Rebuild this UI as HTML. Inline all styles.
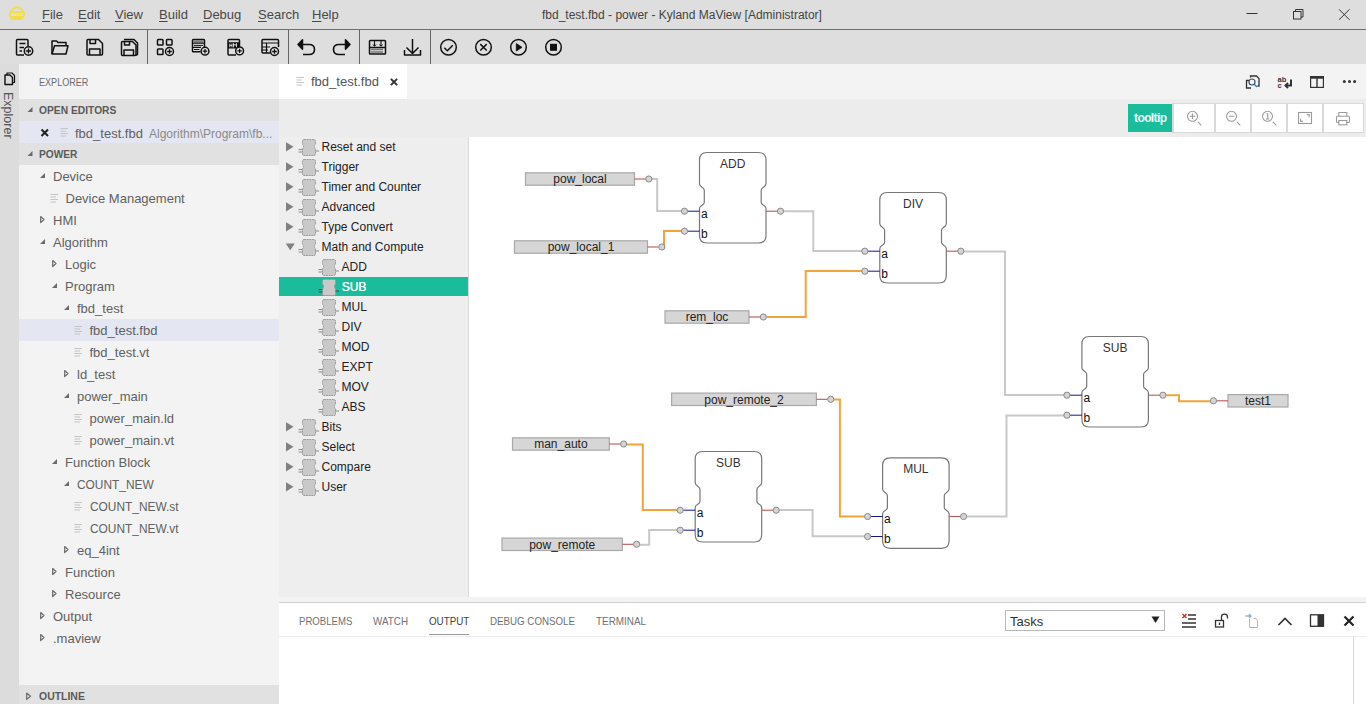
<!DOCTYPE html>
<html><head><meta charset="utf-8">
<style>
*{box-sizing:border-box;margin:0;padding:0}
html,body{width:1366px;height:704px;overflow:hidden;background:#fff;font-family:"Liberation Sans",sans-serif;color:#333}
.abs{position:absolute}
.menu{position:absolute;top:7px;font-size:13px;color:#484848;white-space:nowrap}
.menu u{text-decoration:underline;text-decoration-thickness:1px;text-underline-offset:2px}
.row{position:absolute;left:19px;width:260px;height:22px;font-size:13px;color:#616161;white-space:nowrap}
.row span{position:absolute;top:3px}
.hdr{position:absolute;left:19px;width:260px;height:22px;background:#e1e1e1;font-size:11px;font-weight:bold;color:#555}
.pr{position:absolute;left:279px;width:189px;height:20px;font-size:12px;color:#222;white-space:nowrap}
.pr span{position:absolute;top:3px}
.ptab{position:absolute;top:615px;font-size:11px;color:#717171;white-space:nowrap;transform-origin:0 0}
svg{position:absolute;overflow:visible}
</style></head><body>
<!-- backgrounds -->
<div class="abs" style="left:0;top:0;width:1366px;height:29px;background:#dedede"></div>
<div class="abs" style="left:0;top:29px;width:1366px;height:1px;background:#6e6e6e"></div>
<div class="abs" style="left:0;top:30px;width:1366px;height:34px;background:#dedede"></div>
<div class="abs" style="left:147px;top:30px;width:1px;height:34px;background:#666"></div>
<div class="abs" style="left:288px;top:30px;width:1px;height:34px;background:#666"></div>
<div class="abs" style="left:359px;top:30px;width:1px;height:34px;background:#666"></div>
<div class="abs" style="left:430px;top:30px;width:1px;height:34px;background:#666"></div>
<div class="abs" style="left:0;top:64px;width:19px;height:640px;background:#dcdcdc"></div>
<div class="abs" style="left:19px;top:64px;width:260px;height:640px;background:#f3f3f3"></div>
<div class="abs" style="left:279px;top:64px;width:1087px;height:35px;background:#f3f3f3"></div>
<div class="abs" style="left:279px;top:64px;width:128px;height:35px;background:#fff"></div>
<div class="abs" style="left:279px;top:99px;width:1087px;height:38px;background:#ececec"></div>
<div class="abs" style="left:279px;top:137px;width:189px;height:460px;background:#eeeeee"></div>
<div class="abs" style="left:468px;top:137px;width:898px;height:460px;background:#fff;border-left:1px solid #dadada"></div>
<div class="abs" style="left:279px;top:597px;width:1087px;height:5px;background:#f3f3f3"></div>
<div class="abs" style="left:279px;top:602px;width:1087px;height:102px;background:#fff;border-top:1px solid #d0d0d0"></div>
<!-- title -->
<svg style="left:0;top:0" width="40" height="30" viewBox="0 0 40 30">
 <g fill="none" stroke="#f2dc4c" stroke-width="1.8" stroke-linejoin="round">
  <path d="M10.5 13 Q11 9 17 6.8 Q23 9 23.5 13"/>
  <rect x="9.8" y="12.2" width="14.4" height="4.6" rx="2"/>
 </g>
 <rect x="10.5" y="16" width="13" height="4" rx="1.5" fill="#f2dc4c"/>
 <path d="M13 14.5 H21" stroke="#f6e27a" stroke-width="1.5"/>
 <circle cx="15" cy="17.8" r="0.9" fill="#f7cf6a"/><circle cx="19" cy="17.8" r="0.9" fill="#f7cf6a"/>
</svg>
<div class="menu" style="left:42px"><u>F</u>ile</div>
<div class="menu" style="left:78px"><u>E</u>dit</div>
<div class="menu" style="left:115px"><u>V</u>iew</div>
<div class="menu" style="left:159px"><u>B</u>uild</div>
<div class="menu" style="left:203px"><u>D</u>ebug</div>
<div class="menu" style="left:258px"><u>S</u>earch</div>
<div class="menu" style="left:312px"><u>H</u>elp</div>
<div class="abs" style="left:542px;top:8px;font-size:12px;color:#444;white-space:nowrap">fbd_test.fbd - power - Kyland MaView [Administrator]</div>
<svg style="left:1230px;top:0" width="136" height="29" viewBox="1230 0 136 29">
 <g stroke="#333" stroke-width="1" fill="none">
  <path d="M1246.5 13.5 H1257.5"/>
  <rect x="1293.5" y="11.5" width="7.5" height="7.5"/>
  <path d="M1295.5 11.5 V9.5 H1303 V17 H1301"/>
  <path d="M1339 9.3 L1349.5 19.8 M1349.5 9.3 L1339 19.8"/>
 </g>
</svg>
<!-- toolbar icons -->
<svg style="left:0;top:30px" width="580" height="34" viewBox="0 30 580 34">
 <g stroke="#111" stroke-width="1.5" fill="none" stroke-linejoin="round">
  <!-- new file -->
  <path d="M24 55 H17.5 Q16.5 55 16.5 54 V40.5 Q16.5 39.5 17.5 39.5 H27 Q28 39.5 28 40.5 V46"/>
  <path d="M19.5 43.5 H25.5 M19.5 47.5 H24 M19.5 51 H22"/>
  <circle cx="28.5" cy="51" r="4.2" fill="#dedede"/>
  <path d="M28.5 48.5 V53.5 M26 51 H31" stroke-width="1.3"/>
  <!-- folder -->
  <path d="M52 54 V41 H56.5 L58 42.5 H66 V45.5"/>
  <path d="M52 54 L54.5 45.8 H68 L66 54 Z"/>
  <!-- save -->
  <path d="M88 39.5 H98.5 L102.5 43.5 V54 Q102.5 55 101.5 55 H88 Q87 55 87 54 V40.5 Q87 39.5 88 39.5 Z"/>
  <path d="M90 39.5 V43.5 H95.5 V39.5"/>
  <path d="M89.5 55 V49 H100 V55"/>
  <!-- save all -->
  <path d="M124 39.5 H134 L137.5 43 V54 Q137.5 55 136.5 55 H136"/>
  <path d="M122.5 41.5 H132.5 L136 45 V54.5 Q136 55.5 135 55.5 H122.5 Q121.5 55.5 121.5 54.5 V42.5 Q121.5 41.5 122.5 41.5 Z"/>
  <path d="M124.5 41.5 V45 H129.5 V41.5"/>
  <path d="M124 55.5 V50 H133.5 V55.5"/>
  <!-- grid add -->
  <rect x="157.5" y="39.5" width="5.5" height="5.5" rx="0.8"/>
  <rect x="166.5" y="39.5" width="5.5" height="5.5" rx="0.8"/>
  <rect x="157.5" y="49" width="5.5" height="5.5" rx="0.8"/>
  <circle cx="169.5" cy="51.5" r="4" fill="#dedede"/>
  <path d="M169.5 49.2 V53.8 M167.2 51.5 H171.8" stroke-width="1.3"/>
  <!-- list add -->
  <path d="M200.5 51.8 H193.2 Q192.5 51.8 192.5 51 V40.3 Q192.5 39.5 193.3 39.5 H203.8 Q204.5 39.5 204.5 40.3 V47"/>
  <rect x="193.2" y="40.2" width="10.6" height="2.8" fill="#808080" stroke="none"/>
  <path d="M192.5 43.2 H204.5 M192.5 47.4 H201" stroke-width="1.1"/>
  <path d="M194 45.4 H203 M194 49.5 H199.5" stroke-width="1"/>
  <circle cx="205" cy="51.2" r="3.9" fill="#dedede"/>
  <path d="M205 49 V53.4 M202.8 51.2 H207.2" stroke-width="1.2"/>
  <!-- HMI add -->
  <path d="M236 55 H229 Q228 55 228 54 V40.5 Q228 39.5 229 39.5 H238.5 Q239.5 39.5 239.5 40.5 V46"/>
  <rect x="228" y="42.2" width="12" height="6.3" fill="#111" stroke="none"/>
  <path d="M229.8 43.5 V47.3 M232 43.5 V47.3 M229.8 45.4 H232 M233.5 47.3 V43.5 L235 45.5 L236.5 43.5 V47.3" stroke="#fff" stroke-width="0.8" stroke-linejoin="miter"/>
  <circle cx="239.6" cy="50.9" r="3.9" fill="#dedede"/>
  <path d="M239.6 48.7 V53.1 M237.4 50.9 H241.8" stroke-width="1.2"/>
  <!-- table add -->
  <path d="M270 53 H263 Q262 53 262 52 V40.5 Q262 39.5 263 39.5 H277.5 Q278.5 39.5 278.5 40.5 V47"/>
  <path d="M262 43 H278.5 M262 47 H270 M262 50 H268 M266.5 43 V53" stroke-width="1.2"/>
  <circle cx="274.5" cy="51.5" r="4" fill="#dedede"/>
  <path d="M274.5 49.2 V53.8 M272.2 51.5 H276.8" stroke-width="1.3"/>
  <!-- undo -->
  <path d="M302 44.5 H309 Q314.5 44.5 314.5 49.5 Q314.5 54.5 309 54.5 H303" stroke-width="1.6"/>
  <path d="M298 44.5 L302.5 39.8 V49.2 Z" fill="#111"/>
  <!-- redo -->
  <path d="M346 44.5 H339 Q333.5 44.5 333.5 49.5 Q333.5 54.5 339 54.5 H345" stroke-width="1.6"/>
  <path d="M350 44.5 L345.5 39.8 V49.2 Z" fill="#111"/>
  <!-- build -->
  <rect x="369.5" y="40.5" width="16" height="13.5" rx="0.8"/>
  <path d="M369.5 47.5 H385.5"/>
  <path d="M374.5 41 V46 M381 41 V46" stroke-width="1.1"/>
  <path d="M373 44.5 L374.5 46.3 L376 44.5 M379.5 44.5 L381 46.3 L382.5 44.5" stroke-width="1"/>
  <path d="M371.5 49.5 H383.5 M371.5 52 H383.5" stroke-width="1.3" stroke-dasharray="1 1"/>
  <!-- download -->
  <path d="M412.5 39 V53.5 M406.5 47.5 L412.5 53.5 L418.5 47.5"/>
  <path d="M404.5 50 V55 H420.5 V50"/>
  <!-- circles -->
  <circle cx="448.5" cy="47.3" r="7.8"/>
  <path d="M444.3 47.8 L447.3 50.8 L452.8 45.3"/>
  <circle cx="483.5" cy="47.3" r="7.8"/>
  <path d="M480.3 44.1 L486.7 50.5 M486.7 44.1 L480.3 50.5"/>
  <circle cx="518.5" cy="47.3" r="7.8"/>
  <path d="M516.3 43.5 L522 47.3 L516.3 51.1 Z" fill="#111" stroke-width="0.8"/>
  <circle cx="553.5" cy="47.3" r="7.8"/>
  <rect x="550" y="43.8" width="7" height="7" fill="#111" stroke="none"/>
 </g>
</svg>
<!-- sidebar -->
<svg style="left:0;top:64px" width="19" height="80" viewBox="0 64 19 80">
 <g stroke="#111" stroke-width="1.4" fill="none" stroke-linejoin="round">
  <path d="M5 75 H10 L12.5 77.5 V84.5 H5 Z"/>
  <path d="M7 75 V73 H12 L14.5 75.5 V82.5 H12.5" stroke-width="1.2"/>
 </g>
</svg>
<div class="abs" style="left:15px;top:91.5px;font-size:12.5px;color:#555;transform:rotate(90deg);transform-origin:0 0;white-space:nowrap">Explorer</div>
<div class="abs" style="left:39px;top:77px;font-size:10px;color:#6b6b6b;white-space:nowrap;transform:scaleX(0.906);transform-origin:0 0">EXPLORER</div>
<div class="hdr" style="top:99px"></div>
<svg style="left:25px;top:104px" width="12" height="12" viewBox="0 0 12 12"><path d="M7.5 3 V8 H2.5 Z" fill="#6a6a6a"/></svg>
<div class="abs" style="left:39px;top:104px;font-size:11px;font-weight:bold;color:#5a5a5a;white-space:nowrap;transform:scaleX(0.933);transform-origin:0 0">OPEN EDITORS</div>
<div class="abs" style="left:19px;top:121px;width:260px;height:22px;background:#e4e6f1"></div>
<svg style="left:40px;top:128px" width="10" height="10" viewBox="0 0 10 10"><path d="M1.5 1.5 L8 8 M8 1.5 L1.5 8" stroke="#222" stroke-width="2"/></svg>
<svg style="left:60px;top:127px" width="10" height="11" viewBox="0 0 10 11"><path d="M0.5 1.5 H8 M0.5 4 H6 M0.5 6.5 H8 M0.5 9 H6" stroke="#c4c4c4" stroke-width="1.2"/></svg>
<div class="abs" style="left:75px;top:125.5px;font-size:13px;color:#616161;white-space:nowrap">fbd_test.fbd</div>
<div class="abs" style="left:149px;top:126.5px;font-size:12px;color:#8a8a8a;white-space:nowrap">Algorithm\Program\fb...</div>
<div class="hdr" style="top:143px"></div>
<svg style="left:25px;top:148px" width="12" height="12" viewBox="0 0 12 12"><path d="M7.5 3 V8 H2.5 Z" fill="#6a6a6a"/></svg>
<div class="abs" style="left:39px;top:148px;font-size:11px;font-weight:bold;color:#5a5a5a;white-space:nowrap;transform:scaleX(0.924);transform-origin:0 0">POWER</div>

<svg style="left:40px;top:171px" width="8" height="10" viewBox="0 0 8 10"><path d="M5 2 V7 H0 Z" fill="#6a6a6a"/></svg>
<div class="abs" style="left:53px;top:169px;font-size:13px;color:#616161;white-space:nowrap">Device</div>
<svg style="left:50px;top:193px" width="10" height="11" viewBox="0 0 10 11"><path d="M0.5 1.5 H8 M0.5 4 H6 M0.5 6.5 H8 M0.5 9 H6" stroke="#c4c4c4" stroke-width="1.2"/></svg>
<div class="abs" style="left:65.5px;top:191px;font-size:13px;color:#616161;white-space:nowrap">Device Management</div>
<svg style="left:40px;top:215px" width="8" height="10" viewBox="0 0 8 10"><path d="M0.7 1.5 L4 4.5 L0.7 7.5 Z" fill="none" stroke="#6a6a6a" stroke-width="1.2" stroke-linejoin="round"/></svg>
<div class="abs" style="left:53px;top:213px;font-size:13px;color:#616161;white-space:nowrap">HMI</div>
<svg style="left:40px;top:237px" width="8" height="10" viewBox="0 0 8 10"><path d="M5 2 V7 H0 Z" fill="#6a6a6a"/></svg>
<div class="abs" style="left:53px;top:235px;font-size:13px;color:#616161;white-space:nowrap">Algorithm</div>
<svg style="left:52px;top:259px" width="8" height="10" viewBox="0 0 8 10"><path d="M0.7 1.5 L4 4.5 L0.7 7.5 Z" fill="none" stroke="#6a6a6a" stroke-width="1.2" stroke-linejoin="round"/></svg>
<div class="abs" style="left:65px;top:257px;font-size:13px;color:#616161;white-space:nowrap">Logic</div>
<svg style="left:52px;top:281px" width="8" height="10" viewBox="0 0 8 10"><path d="M5 2 V7 H0 Z" fill="#6a6a6a"/></svg>
<div class="abs" style="left:65px;top:279px;font-size:13px;color:#616161;white-space:nowrap">Program</div>
<svg style="left:64px;top:303px" width="8" height="10" viewBox="0 0 8 10"><path d="M5 2 V7 H0 Z" fill="#6a6a6a"/></svg>
<div class="abs" style="left:77px;top:301px;font-size:13px;color:#616161;white-space:nowrap">fbd_test</div>
<div class="abs" style="left:19px;top:319px;width:260px;height:22px;background:#e4e6f1"></div>
<svg style="left:74px;top:325px" width="10" height="11" viewBox="0 0 10 11"><path d="M0.5 1.5 H8 M0.5 4 H6 M0.5 6.5 H8 M0.5 9 H6" stroke="#c4c4c4" stroke-width="1.2"/></svg>
<div class="abs" style="left:89.5px;top:323px;font-size:13px;color:#616161;white-space:nowrap">fbd_test.fbd</div>
<svg style="left:74px;top:347px" width="10" height="11" viewBox="0 0 10 11"><path d="M0.5 1.5 H8 M0.5 4 H6 M0.5 6.5 H8 M0.5 9 H6" stroke="#c4c4c4" stroke-width="1.2"/></svg>
<div class="abs" style="left:89.5px;top:345px;font-size:13px;color:#616161;white-space:nowrap">fbd_test.vt</div>
<svg style="left:64px;top:369px" width="8" height="10" viewBox="0 0 8 10"><path d="M0.7 1.5 L4 4.5 L0.7 7.5 Z" fill="none" stroke="#6a6a6a" stroke-width="1.2" stroke-linejoin="round"/></svg>
<div class="abs" style="left:77px;top:367px;font-size:13px;color:#616161;white-space:nowrap">ld_test</div>
<svg style="left:64px;top:391px" width="8" height="10" viewBox="0 0 8 10"><path d="M5 2 V7 H0 Z" fill="#6a6a6a"/></svg>
<div class="abs" style="left:77px;top:389px;font-size:13px;color:#616161;white-space:nowrap">power_main</div>
<svg style="left:74px;top:413px" width="10" height="11" viewBox="0 0 10 11"><path d="M0.5 1.5 H8 M0.5 4 H6 M0.5 6.5 H8 M0.5 9 H6" stroke="#c4c4c4" stroke-width="1.2"/></svg>
<div class="abs" style="left:89.5px;top:411px;font-size:13px;color:#616161;white-space:nowrap">power_main.ld</div>
<svg style="left:74px;top:435px" width="10" height="11" viewBox="0 0 10 11"><path d="M0.5 1.5 H8 M0.5 4 H6 M0.5 6.5 H8 M0.5 9 H6" stroke="#c4c4c4" stroke-width="1.2"/></svg>
<div class="abs" style="left:89.5px;top:433px;font-size:13px;color:#616161;white-space:nowrap">power_main.vt</div>
<svg style="left:52px;top:457px" width="8" height="10" viewBox="0 0 8 10"><path d="M5 2 V7 H0 Z" fill="#6a6a6a"/></svg>
<div class="abs" style="left:65px;top:455px;font-size:13px;color:#616161;white-space:nowrap">Function Block</div>
<svg style="left:64px;top:479px" width="8" height="10" viewBox="0 0 8 10"><path d="M5 2 V7 H0 Z" fill="#6a6a6a"/></svg>
<div class="abs" style="left:77px;top:477px;font-size:13px;color:#616161;white-space:nowrap;transform:scaleX(0.915);transform-origin:0 0">COUNT_NEW</div>
<svg style="left:74px;top:501px" width="10" height="11" viewBox="0 0 10 11"><path d="M0.5 1.5 H8 M0.5 4 H6 M0.5 6.5 H8 M0.5 9 H6" stroke="#c4c4c4" stroke-width="1.2"/></svg>
<div class="abs" style="left:89.5px;top:499px;font-size:13px;color:#616161;white-space:nowrap;transform:scaleX(0.915);transform-origin:0 0">COUNT_NEW.st</div>
<svg style="left:74px;top:523px" width="10" height="11" viewBox="0 0 10 11"><path d="M0.5 1.5 H8 M0.5 4 H6 M0.5 6.5 H8 M0.5 9 H6" stroke="#c4c4c4" stroke-width="1.2"/></svg>
<div class="abs" style="left:89.5px;top:521px;font-size:13px;color:#616161;white-space:nowrap;transform:scaleX(0.915);transform-origin:0 0">COUNT_NEW.vt</div>
<svg style="left:64px;top:545px" width="8" height="10" viewBox="0 0 8 10"><path d="M0.7 1.5 L4 4.5 L0.7 7.5 Z" fill="none" stroke="#6a6a6a" stroke-width="1.2" stroke-linejoin="round"/></svg>
<div class="abs" style="left:77px;top:543px;font-size:13px;color:#616161;white-space:nowrap">eq_4int</div>
<svg style="left:52px;top:567px" width="8" height="10" viewBox="0 0 8 10"><path d="M0.7 1.5 L4 4.5 L0.7 7.5 Z" fill="none" stroke="#6a6a6a" stroke-width="1.2" stroke-linejoin="round"/></svg>
<div class="abs" style="left:65px;top:565px;font-size:13px;color:#616161;white-space:nowrap">Function</div>
<svg style="left:52px;top:589px" width="8" height="10" viewBox="0 0 8 10"><path d="M0.7 1.5 L4 4.5 L0.7 7.5 Z" fill="none" stroke="#6a6a6a" stroke-width="1.2" stroke-linejoin="round"/></svg>
<div class="abs" style="left:65px;top:587px;font-size:13px;color:#616161;white-space:nowrap">Resource</div>
<svg style="left:40px;top:611px" width="8" height="10" viewBox="0 0 8 10"><path d="M0.7 1.5 L4 4.5 L0.7 7.5 Z" fill="none" stroke="#6a6a6a" stroke-width="1.2" stroke-linejoin="round"/></svg>
<div class="abs" style="left:53px;top:609px;font-size:13px;color:#616161;white-space:nowrap">Output</div>
<svg style="left:40px;top:633px" width="8" height="10" viewBox="0 0 8 10"><path d="M0.7 1.5 L4 4.5 L0.7 7.5 Z" fill="none" stroke="#6a6a6a" stroke-width="1.2" stroke-linejoin="round"/></svg>
<div class="abs" style="left:53px;top:631px;font-size:13px;color:#616161;white-space:nowrap">.maview</div>
<div class="abs" style="left:19px;top:685px;width:260px;height:19px;background:#e1e1e1"></div>
<svg style="left:26px;top:692px" width="8" height="10" viewBox="0 0 8 10"><path d="M0.7 1 L4.5 4.2 L0.7 7.4 Z" fill="none" stroke="#6a6a6a" stroke-width="1.2" stroke-linejoin="round"/></svg>
<div class="abs" style="left:39px;top:690px;font-size:11px;font-weight:bold;color:#5a5a5a;white-space:nowrap;transform:scaleX(0.95);transform-origin:0 0">OUTLINE</div><!-- editor tab -->
<svg style="left:296px;top:76px" width="10" height="11" viewBox="0 0 10 11"><path d="M0.5 1.5 H8 M0.5 4 H6 M0.5 6.5 H8 M0.5 9 H6" stroke="#c4c4c4" stroke-width="1.2"/></svg>
<div class="abs" style="left:311px;top:74px;font-size:13px;color:#555;white-space:nowrap">fbd_test.fbd</div>
<svg style="left:390px;top:78px" width="10" height="10" viewBox="0 0 10 10"><path d="M0.9 0.9 L7.1 7.1 M7.1 0.9 L0.9 7.1" stroke="#333" stroke-width="2"/></svg>
<svg style="left:1240px;top:70px" width="126" height="24" viewBox="1240 70 126 24">
 <g fill="none" stroke="#333" stroke-width="1.3">
  <path d="M1250.5 77.5 V76 H1256.5 L1259 78.5 V86 H1257.5"/>
  <path d="M1249 80.5 H1246.5 V88 H1251"/>
  <circle cx="1252" cy="82" r="3" stroke="#34526f" stroke-width="1.2"/>
  <path d="M1254.2 84.2 L1257 87" stroke="#3b78b8" stroke-width="1.4"/>
  <path d="M1291 79.5 V85.5 H1286" stroke-width="2"/>
  <path d="M1288 83 L1285.5 85.5 L1288 88" stroke-width="2"/>
  <rect x="1310.6" y="76.6" width="12.8" height="10.8" stroke-width="1.2"/>
  <path d="M1310.5 77.6 H1323.5" stroke-width="2.2"/>
  <path d="M1317 77 V87.5" stroke-width="1.4"/>
 </g>
 <text x="1277.5" y="82" font-size="7.5" font-weight="bold" fill="#333" font-family="Liberation Sans">ab</text>
 <text x="1277.5" y="88" font-size="7.5" font-weight="bold" fill="#333" font-family="Liberation Sans">c</text>
 <g fill="#333"><circle cx="1344.3" cy="81.5" r="1.5"/><circle cx="1349.5" cy="81.5" r="1.5"/><circle cx="1354.6" cy="81.5" r="1.5"/></g>
</svg>
<div class="abs" style="left:1128px;top:104px;width:44px;height:28px;background:#1abc9c"></div>
<div class="abs" style="left:1134px;top:111px;font-size:12px;font-weight:bold;color:#eefcf8;white-space:nowrap;letter-spacing:-0.6px">tooltip</div>
<div class="abs" style="left:1172px;top:103px;width:192px;height:30px;background:#d9d9d9"></div>
<div class="abs" style="left:1174px;top:104px;width:40px;height:28px;background:#fff"></div>
<div class="abs" style="left:1216px;top:104px;width:34px;height:28px;background:#fff"></div>
<div class="abs" style="left:1252px;top:104px;width:34px;height:28px;background:#fff"></div>
<div class="abs" style="left:1288px;top:104px;width:34px;height:28px;background:#fff"></div>
<div class="abs" style="left:1324px;top:104px;width:39px;height:28px;background:#fff"></div>
<svg style="left:1173px;top:103px" width="193" height="30" viewBox="1173 103 193 30">
 <g fill="none" stroke="#9a9a9a" stroke-width="1.1">
  <circle cx="1192.5" cy="116.3" r="5"/><path d="M1192.5 113.6 V119 M1189.8 116.3 H1195.2 M1197.8 121.9 L1201.3 125.4"/>
  <circle cx="1231.5" cy="116.3" r="5"/><path d="M1228.8 116.3 H1234.2 M1236.8 121.9 L1240.3 125.4"/>
  <circle cx="1267.5" cy="116.3" r="5"/><path d="M1267.7 113.5 V119 M1266 119 H1269.2 M1266.6 114.3 L1267.7 113.5 M1272.8 121.9 L1276.3 125.4"/>
  <rect x="1298.5" y="112.5" width="13" height="11"/>
  <path d="M1306.8 114.6 H1309.2 V117.2 M1300.6 118.8 V121.4 H1303"/>
  <path d="M1338.8 116.3 V112.5 H1346.8 V116.3"/>
  <path d="M1339 122.5 H1337.5 Q1336.5 122.5 1336.5 121.5 V117.3 Q1336.5 116.3 1337.5 116.3 H1348.5 Q1349.5 116.3 1349.5 117.3 V121.5 Q1349.5 122.5 1348.5 122.5 H1346.5"/>
  <rect x="1338.8" y="120.5" width="8" height="4.3"/>
 </g>
</svg>
<div class="abs" style="left:279px;top:277px;width:189px;height:19px;background:#1abc9c"></div>
<svg style="left:285px;top:141px" width="10" height="12" viewBox="0 0 10 12"><path d="M1 1.2 L8.5 5.8 L1 10.4 Z" fill="#808080"/></svg>
<svg style="left:298px;top:139px" width="22" height="18" viewBox="0 0 22 18"><path d="M6 0.5 H16 Q17.5 0.5 17.5 2 V4.8 Q17.5 5.6 16.5 6.3 V8.7 Q17.5 9.4 17.5 10.2 V15 Q17.5 16.5 16 16.5 H6 Q4.5 16.5 4.5 15 V10.2 Q4.5 9.4 5.5 8.7 V6.3 Q4.5 5.6 4.5 4.8 V2 Q4.5 0.5 6 0.5 Z" fill="#c9c9c9" stroke="#9c9c9c" stroke-width="1" stroke-dasharray="2 0.6"/><path d="M0.5 10.5 H4.5 M0.5 13 H4.5 M17.5 12 H21" stroke="#888" stroke-width="1"/></svg>
<div class="abs" style="left:321.5px;top:140px;font-size:12px;color:#222;white-space:nowrap">Reset and set</div>
<svg style="left:285px;top:161px" width="10" height="12" viewBox="0 0 10 12"><path d="M1 1.2 L8.5 5.8 L1 10.4 Z" fill="#808080"/></svg>
<svg style="left:298px;top:159px" width="22" height="18" viewBox="0 0 22 18"><path d="M6 0.5 H16 Q17.5 0.5 17.5 2 V4.8 Q17.5 5.6 16.5 6.3 V8.7 Q17.5 9.4 17.5 10.2 V15 Q17.5 16.5 16 16.5 H6 Q4.5 16.5 4.5 15 V10.2 Q4.5 9.4 5.5 8.7 V6.3 Q4.5 5.6 4.5 4.8 V2 Q4.5 0.5 6 0.5 Z" fill="#c9c9c9" stroke="#9c9c9c" stroke-width="1" stroke-dasharray="2 0.6"/><path d="M0.5 10.5 H4.5 M0.5 13 H4.5 M17.5 12 H21" stroke="#888" stroke-width="1"/></svg>
<div class="abs" style="left:321.5px;top:160px;font-size:12px;color:#222;white-space:nowrap">Trigger</div>
<svg style="left:285px;top:181px" width="10" height="12" viewBox="0 0 10 12"><path d="M1 1.2 L8.5 5.8 L1 10.4 Z" fill="#808080"/></svg>
<svg style="left:298px;top:179px" width="22" height="18" viewBox="0 0 22 18"><path d="M6 0.5 H16 Q17.5 0.5 17.5 2 V4.8 Q17.5 5.6 16.5 6.3 V8.7 Q17.5 9.4 17.5 10.2 V15 Q17.5 16.5 16 16.5 H6 Q4.5 16.5 4.5 15 V10.2 Q4.5 9.4 5.5 8.7 V6.3 Q4.5 5.6 4.5 4.8 V2 Q4.5 0.5 6 0.5 Z" fill="#c9c9c9" stroke="#9c9c9c" stroke-width="1" stroke-dasharray="2 0.6"/><path d="M0.5 10.5 H4.5 M0.5 13 H4.5 M17.5 12 H21" stroke="#888" stroke-width="1"/></svg>
<div class="abs" style="left:321.5px;top:180px;font-size:12px;color:#222;white-space:nowrap">Timer and Counter</div>
<svg style="left:285px;top:201px" width="10" height="12" viewBox="0 0 10 12"><path d="M1 1.2 L8.5 5.8 L1 10.4 Z" fill="#808080"/></svg>
<svg style="left:298px;top:199px" width="22" height="18" viewBox="0 0 22 18"><path d="M6 0.5 H16 Q17.5 0.5 17.5 2 V4.8 Q17.5 5.6 16.5 6.3 V8.7 Q17.5 9.4 17.5 10.2 V15 Q17.5 16.5 16 16.5 H6 Q4.5 16.5 4.5 15 V10.2 Q4.5 9.4 5.5 8.7 V6.3 Q4.5 5.6 4.5 4.8 V2 Q4.5 0.5 6 0.5 Z" fill="#c9c9c9" stroke="#9c9c9c" stroke-width="1" stroke-dasharray="2 0.6"/><path d="M0.5 10.5 H4.5 M0.5 13 H4.5 M17.5 12 H21" stroke="#888" stroke-width="1"/></svg>
<div class="abs" style="left:321.5px;top:200px;font-size:12px;color:#222;white-space:nowrap">Advanced</div>
<svg style="left:285px;top:221px" width="10" height="12" viewBox="0 0 10 12"><path d="M1 1.2 L8.5 5.8 L1 10.4 Z" fill="#808080"/></svg>
<svg style="left:298px;top:219px" width="22" height="18" viewBox="0 0 22 18"><path d="M6 0.5 H16 Q17.5 0.5 17.5 2 V4.8 Q17.5 5.6 16.5 6.3 V8.7 Q17.5 9.4 17.5 10.2 V15 Q17.5 16.5 16 16.5 H6 Q4.5 16.5 4.5 15 V10.2 Q4.5 9.4 5.5 8.7 V6.3 Q4.5 5.6 4.5 4.8 V2 Q4.5 0.5 6 0.5 Z" fill="#c9c9c9" stroke="#9c9c9c" stroke-width="1" stroke-dasharray="2 0.6"/><path d="M0.5 10.5 H4.5 M0.5 13 H4.5 M17.5 12 H21" stroke="#888" stroke-width="1"/></svg>
<div class="abs" style="left:321.5px;top:220px;font-size:12px;color:#222;white-space:nowrap">Type Convert</div>
<svg style="left:285px;top:242px" width="11" height="10" viewBox="0 0 11 10"><path d="M0.7 1.5 H9.8 L5.25 8.2 Z" fill="#808080"/></svg>
<svg style="left:298px;top:239px" width="22" height="18" viewBox="0 0 22 18"><path d="M6 0.5 H16 Q17.5 0.5 17.5 2 V4.8 Q17.5 5.6 16.5 6.3 V8.7 Q17.5 9.4 17.5 10.2 V15 Q17.5 16.5 16 16.5 H6 Q4.5 16.5 4.5 15 V10.2 Q4.5 9.4 5.5 8.7 V6.3 Q4.5 5.6 4.5 4.8 V2 Q4.5 0.5 6 0.5 Z" fill="#c9c9c9" stroke="#9c9c9c" stroke-width="1" stroke-dasharray="2 0.6"/><path d="M0.5 10.5 H4.5 M0.5 13 H4.5 M17.5 12 H21" stroke="#888" stroke-width="1"/></svg>
<div class="abs" style="left:321.5px;top:240px;font-size:12px;color:#222;white-space:nowrap">Math and Compute</div>
<svg style="left:318px;top:259px" width="22" height="18" viewBox="0 0 22 18"><path d="M6 0.5 H16 Q17.5 0.5 17.5 2 V4.8 Q17.5 5.6 16.5 6.3 V8.7 Q17.5 9.4 17.5 10.2 V15 Q17.5 16.5 16 16.5 H6 Q4.5 16.5 4.5 15 V10.2 Q4.5 9.4 5.5 8.7 V6.3 Q4.5 5.6 4.5 4.8 V2 Q4.5 0.5 6 0.5 Z" fill="#c9c9c9" stroke="#9c9c9c" stroke-width="1" stroke-dasharray="2 0.6"/><path d="M0.5 10.5 H4.5 M0.5 13 H4.5 M17.5 12 H21" stroke="#888" stroke-width="1"/></svg>
<div class="abs" style="left:341.5px;top:260px;font-size:12px;color:#222;white-space:nowrap">ADD</div>
<svg style="left:318px;top:279px" width="22" height="18" viewBox="0 0 22 18"><path d="M6 0.5 H16 Q17.5 0.5 17.5 2 V4.8 Q17.5 5.6 16.5 6.3 V8.7 Q17.5 9.4 17.5 10.2 V15 Q17.5 16.5 16 16.5 H6 Q4.5 16.5 4.5 15 V10.2 Q4.5 9.4 5.5 8.7 V6.3 Q4.5 5.6 4.5 4.8 V2 Q4.5 0.5 6 0.5 Z" fill="#c9c9c9" stroke="#9c9c9c" stroke-width="1" stroke-dasharray="2 0.6"/><path d="M0.5 10.5 H4.5 M0.5 13 H4.5 M17.5 12 H21" stroke="#444" stroke-width="1"/></svg>
<div class="abs" style="left:341.5px;top:280px;font-size:12px;color:#effffb;white-space:nowrap;text-shadow:0.4px 0 0 #effffb">SUB</div>
<svg style="left:318px;top:299px" width="22" height="18" viewBox="0 0 22 18"><path d="M6 0.5 H16 Q17.5 0.5 17.5 2 V4.8 Q17.5 5.6 16.5 6.3 V8.7 Q17.5 9.4 17.5 10.2 V15 Q17.5 16.5 16 16.5 H6 Q4.5 16.5 4.5 15 V10.2 Q4.5 9.4 5.5 8.7 V6.3 Q4.5 5.6 4.5 4.8 V2 Q4.5 0.5 6 0.5 Z" fill="#c9c9c9" stroke="#9c9c9c" stroke-width="1" stroke-dasharray="2 0.6"/><path d="M0.5 10.5 H4.5 M0.5 13 H4.5 M17.5 12 H21" stroke="#888" stroke-width="1"/></svg>
<div class="abs" style="left:341.5px;top:300px;font-size:12px;color:#222;white-space:nowrap">MUL</div>
<svg style="left:318px;top:319px" width="22" height="18" viewBox="0 0 22 18"><path d="M6 0.5 H16 Q17.5 0.5 17.5 2 V4.8 Q17.5 5.6 16.5 6.3 V8.7 Q17.5 9.4 17.5 10.2 V15 Q17.5 16.5 16 16.5 H6 Q4.5 16.5 4.5 15 V10.2 Q4.5 9.4 5.5 8.7 V6.3 Q4.5 5.6 4.5 4.8 V2 Q4.5 0.5 6 0.5 Z" fill="#c9c9c9" stroke="#9c9c9c" stroke-width="1" stroke-dasharray="2 0.6"/><path d="M0.5 10.5 H4.5 M0.5 13 H4.5 M17.5 12 H21" stroke="#888" stroke-width="1"/></svg>
<div class="abs" style="left:341.5px;top:320px;font-size:12px;color:#222;white-space:nowrap">DIV</div>
<svg style="left:318px;top:339px" width="22" height="18" viewBox="0 0 22 18"><path d="M6 0.5 H16 Q17.5 0.5 17.5 2 V4.8 Q17.5 5.6 16.5 6.3 V8.7 Q17.5 9.4 17.5 10.2 V15 Q17.5 16.5 16 16.5 H6 Q4.5 16.5 4.5 15 V10.2 Q4.5 9.4 5.5 8.7 V6.3 Q4.5 5.6 4.5 4.8 V2 Q4.5 0.5 6 0.5 Z" fill="#c9c9c9" stroke="#9c9c9c" stroke-width="1" stroke-dasharray="2 0.6"/><path d="M0.5 10.5 H4.5 M0.5 13 H4.5 M17.5 12 H21" stroke="#888" stroke-width="1"/></svg>
<div class="abs" style="left:341.5px;top:340px;font-size:12px;color:#222;white-space:nowrap">MOD</div>
<svg style="left:318px;top:359px" width="22" height="18" viewBox="0 0 22 18"><path d="M6 0.5 H16 Q17.5 0.5 17.5 2 V4.8 Q17.5 5.6 16.5 6.3 V8.7 Q17.5 9.4 17.5 10.2 V15 Q17.5 16.5 16 16.5 H6 Q4.5 16.5 4.5 15 V10.2 Q4.5 9.4 5.5 8.7 V6.3 Q4.5 5.6 4.5 4.8 V2 Q4.5 0.5 6 0.5 Z" fill="#c9c9c9" stroke="#9c9c9c" stroke-width="1" stroke-dasharray="2 0.6"/><path d="M0.5 10.5 H4.5 M0.5 13 H4.5 M17.5 12 H21" stroke="#888" stroke-width="1"/></svg>
<div class="abs" style="left:341.5px;top:360px;font-size:12px;color:#222;white-space:nowrap">EXPT</div>
<svg style="left:318px;top:379px" width="22" height="18" viewBox="0 0 22 18"><path d="M6 0.5 H16 Q17.5 0.5 17.5 2 V4.8 Q17.5 5.6 16.5 6.3 V8.7 Q17.5 9.4 17.5 10.2 V15 Q17.5 16.5 16 16.5 H6 Q4.5 16.5 4.5 15 V10.2 Q4.5 9.4 5.5 8.7 V6.3 Q4.5 5.6 4.5 4.8 V2 Q4.5 0.5 6 0.5 Z" fill="#c9c9c9" stroke="#9c9c9c" stroke-width="1" stroke-dasharray="2 0.6"/><path d="M0.5 10.5 H4.5 M0.5 13 H4.5 M17.5 12 H21" stroke="#888" stroke-width="1"/></svg>
<div class="abs" style="left:341.5px;top:380px;font-size:12px;color:#222;white-space:nowrap">MOV</div>
<svg style="left:318px;top:399px" width="22" height="18" viewBox="0 0 22 18"><path d="M6 0.5 H16 Q17.5 0.5 17.5 2 V4.8 Q17.5 5.6 16.5 6.3 V8.7 Q17.5 9.4 17.5 10.2 V15 Q17.5 16.5 16 16.5 H6 Q4.5 16.5 4.5 15 V10.2 Q4.5 9.4 5.5 8.7 V6.3 Q4.5 5.6 4.5 4.8 V2 Q4.5 0.5 6 0.5 Z" fill="#c9c9c9" stroke="#9c9c9c" stroke-width="1" stroke-dasharray="2 0.6"/><path d="M0.5 10.5 H4.5 M0.5 13 H4.5 M17.5 12 H21" stroke="#888" stroke-width="1"/></svg>
<div class="abs" style="left:341.5px;top:400px;font-size:12px;color:#222;white-space:nowrap">ABS</div>
<svg style="left:285px;top:421px" width="10" height="12" viewBox="0 0 10 12"><path d="M1 1.2 L8.5 5.8 L1 10.4 Z" fill="#808080"/></svg>
<svg style="left:298px;top:419px" width="22" height="18" viewBox="0 0 22 18"><path d="M6 0.5 H16 Q17.5 0.5 17.5 2 V4.8 Q17.5 5.6 16.5 6.3 V8.7 Q17.5 9.4 17.5 10.2 V15 Q17.5 16.5 16 16.5 H6 Q4.5 16.5 4.5 15 V10.2 Q4.5 9.4 5.5 8.7 V6.3 Q4.5 5.6 4.5 4.8 V2 Q4.5 0.5 6 0.5 Z" fill="#c9c9c9" stroke="#9c9c9c" stroke-width="1" stroke-dasharray="2 0.6"/><path d="M0.5 10.5 H4.5 M0.5 13 H4.5 M17.5 12 H21" stroke="#888" stroke-width="1"/></svg>
<div class="abs" style="left:321.5px;top:420px;font-size:12px;color:#222;white-space:nowrap">Bits</div>
<svg style="left:285px;top:441px" width="10" height="12" viewBox="0 0 10 12"><path d="M1 1.2 L8.5 5.8 L1 10.4 Z" fill="#808080"/></svg>
<svg style="left:298px;top:439px" width="22" height="18" viewBox="0 0 22 18"><path d="M6 0.5 H16 Q17.5 0.5 17.5 2 V4.8 Q17.5 5.6 16.5 6.3 V8.7 Q17.5 9.4 17.5 10.2 V15 Q17.5 16.5 16 16.5 H6 Q4.5 16.5 4.5 15 V10.2 Q4.5 9.4 5.5 8.7 V6.3 Q4.5 5.6 4.5 4.8 V2 Q4.5 0.5 6 0.5 Z" fill="#c9c9c9" stroke="#9c9c9c" stroke-width="1" stroke-dasharray="2 0.6"/><path d="M0.5 10.5 H4.5 M0.5 13 H4.5 M17.5 12 H21" stroke="#888" stroke-width="1"/></svg>
<div class="abs" style="left:321.5px;top:440px;font-size:12px;color:#222;white-space:nowrap">Select</div>
<svg style="left:285px;top:461px" width="10" height="12" viewBox="0 0 10 12"><path d="M1 1.2 L8.5 5.8 L1 10.4 Z" fill="#808080"/></svg>
<svg style="left:298px;top:459px" width="22" height="18" viewBox="0 0 22 18"><path d="M6 0.5 H16 Q17.5 0.5 17.5 2 V4.8 Q17.5 5.6 16.5 6.3 V8.7 Q17.5 9.4 17.5 10.2 V15 Q17.5 16.5 16 16.5 H6 Q4.5 16.5 4.5 15 V10.2 Q4.5 9.4 5.5 8.7 V6.3 Q4.5 5.6 4.5 4.8 V2 Q4.5 0.5 6 0.5 Z" fill="#c9c9c9" stroke="#9c9c9c" stroke-width="1" stroke-dasharray="2 0.6"/><path d="M0.5 10.5 H4.5 M0.5 13 H4.5 M17.5 12 H21" stroke="#888" stroke-width="1"/></svg>
<div class="abs" style="left:321.5px;top:460px;font-size:12px;color:#222;white-space:nowrap">Compare</div>
<svg style="left:285px;top:481px" width="10" height="12" viewBox="0 0 10 12"><path d="M1 1.2 L8.5 5.8 L1 10.4 Z" fill="#808080"/></svg>
<svg style="left:298px;top:479px" width="22" height="18" viewBox="0 0 22 18"><path d="M6 0.5 H16 Q17.5 0.5 17.5 2 V4.8 Q17.5 5.6 16.5 6.3 V8.7 Q17.5 9.4 17.5 10.2 V15 Q17.5 16.5 16 16.5 H6 Q4.5 16.5 4.5 15 V10.2 Q4.5 9.4 5.5 8.7 V6.3 Q4.5 5.6 4.5 4.8 V2 Q4.5 0.5 6 0.5 Z" fill="#c9c9c9" stroke="#9c9c9c" stroke-width="1" stroke-dasharray="2 0.6"/><path d="M0.5 10.5 H4.5 M0.5 13 H4.5 M17.5 12 H21" stroke="#888" stroke-width="1"/></svg>
<div class="abs" style="left:321.5px;top:480px;font-size:12px;color:#222;white-space:nowrap">User</div><svg style="left:469px;top:137px" width="897" height="460" viewBox="469 137 897 460" font-family="Liberation Sans">
<path d="M652 179 H657.2 V211 H681.5" fill="none" stroke="#c8c8c8" stroke-width="2"/>
<path d="M664.8 247 H664 V231 H681.5" fill="none" stroke="#f0a43a" stroke-width="2"/>
<path d="M783 211.3 H813.3 V251 H862" fill="none" stroke="#c8c8c8" stroke-width="2"/>
<path d="M767 317 H805.7 V271 H862" fill="none" stroke="#f0a43a" stroke-width="2"/>
<path d="M964 251.5 H1005 V395 H1064.5" fill="none" stroke="#c8c8c8" stroke-width="2"/>
<path d="M967 516.5 H1006.5 V415.5 H1064.5" fill="none" stroke="#c8c8c8" stroke-width="2"/>
<path d="M1166 395.2 H1179 V401.2 H1210.5" fill="none" stroke="#f0a43a" stroke-width="2"/>
<path d="M627 444.4 H642.8 V510 H677.5" fill="none" stroke="#f0a43a" stroke-width="2"/>
<path d="M640 544.7 H649.2 V530 H677.5" fill="none" stroke="#c8c8c8" stroke-width="2"/>
<path d="M834 399.5 H839.9 V516.6 H865" fill="none" stroke="#f0a43a" stroke-width="2"/>
<path d="M779 510 H812.6 V536.2 H865" fill="none" stroke="#c8c8c8" stroke-width="2"/>
<rect x="525.5" y="172.8" width="109.0" height="12.4" fill="#d6d6d6" stroke="#a8a8a8" stroke-width="1.2"/>
<text x="580.0" y="183.3" text-anchor="middle" font-size="12" fill="#222">pow_local</text>
<path d="M634.5 179 H645.5" stroke="#b85858" stroke-width="1.1"/>
<circle cx="648.8" cy="179" r="3.1" fill="#d4d4d4" stroke="#8a8a8a" stroke-width="1"/>
<rect x="514.5" y="240.8" width="133.0" height="12.4" fill="#d6d6d6" stroke="#a8a8a8" stroke-width="1.2"/>
<text x="581.0" y="251.3" text-anchor="middle" font-size="12" fill="#222">pow_local_1</text>
<path d="M647.5 247 H658.5" stroke="#b85858" stroke-width="1.1"/>
<circle cx="661.8" cy="247" r="3.1" fill="#d4d4d4" stroke="#8a8a8a" stroke-width="1"/>
<rect x="665" y="310.8" width="84" height="12.4" fill="#d6d6d6" stroke="#a8a8a8" stroke-width="1.2"/>
<text x="707.0" y="321.3" text-anchor="middle" font-size="12" fill="#222">rem_loc</text>
<path d="M749 317 H760" stroke="#b85858" stroke-width="1.1"/>
<circle cx="763.3" cy="317" r="3.1" fill="#d4d4d4" stroke="#8a8a8a" stroke-width="1"/>
<rect x="512.5" y="437.8" width="96.79999999999995" height="12.4" fill="#d6d6d6" stroke="#a8a8a8" stroke-width="1.2"/>
<text x="560.9" y="448.3" text-anchor="middle" font-size="12" fill="#222">man_auto</text>
<path d="M609.3 444 H620.3" stroke="#b85858" stroke-width="1.1"/>
<circle cx="623.5999999999999" cy="444" r="3.1" fill="#d4d4d4" stroke="#8a8a8a" stroke-width="1"/>
<rect x="502" y="538.0999999999999" width="120.29999999999995" height="12.4" fill="#d6d6d6" stroke="#a8a8a8" stroke-width="1.2"/>
<text x="562.15" y="548.5999999999999" text-anchor="middle" font-size="12" fill="#222">pow_remote</text>
<path d="M622.3 544.3 H633.3" stroke="#b85858" stroke-width="1.1"/>
<circle cx="636.5999999999999" cy="544.3" r="3.1" fill="#d4d4d4" stroke="#8a8a8a" stroke-width="1"/>
<rect x="671.6" y="393.1" width="144.79999999999995" height="12.4" fill="#d6d6d6" stroke="#a8a8a8" stroke-width="1.2"/>
<text x="744.0" y="403.6" text-anchor="middle" font-size="12" fill="#222">pow_remote_2</text>
<path d="M816.4 399.3 H827.4" stroke="#b85858" stroke-width="1.1"/>
<circle cx="830.6999999999999" cy="399.3" r="3.1" fill="#d4d4d4" stroke="#8a8a8a" stroke-width="1"/>
<rect x="1228" y="394.6" width="60" height="12.4" fill="#d6d6d6" stroke="#a8a8a8" stroke-width="1.2"/>
<text x="1258.0" y="405.1" text-anchor="middle" font-size="12" fill="#222">test1</text>
<path d="M1217 400.8 H1228" stroke="#b85858" stroke-width="1.1"/>
<circle cx="1213.5" cy="400.8" r="3.1" fill="#d4d4d4" stroke="#8a8a8a" stroke-width="1"/>
<path d="M707.0 152.5 H758.5 Q766.0 152.5 766.0 160.0 V183.8 C766.0 187.3 761.2 187.2 761.2 190.2 V202.5 C761.2 205.5 766.0 205.0 766.0 208.5 V235.5 Q766.0 243.0 758.5 243.0 H707.0 Q699.5 243.0 699.5 235.5 V208.5 C699.5 205.0 704.3 205.5 704.3 202.5 V190.2 C704.3 187.2 699.5 187.3 699.5 183.8 V160.0 Q699.5 152.5 707.0 152.5 Z" fill="#fff" stroke="#787878" stroke-width="1.2"/>
<text x="732.75" y="167.7" text-anchor="middle" font-size="12" fill="#333">ADD</text>
<path d="M687.5 211.2 H699.5" stroke="#15158f" stroke-width="1"/>
<circle cx="684.5" cy="211.2" r="3.1" fill="#d4d4d4" stroke="#8a8a8a" stroke-width="1"/>
<path d="M687.5 231.2 H699.5" stroke="#15158f" stroke-width="1"/>
<circle cx="684.5" cy="231.2" r="3.1" fill="#d4d4d4" stroke="#8a8a8a" stroke-width="1"/>
<text x="701.0" y="217.7" font-size="12" fill="#111">a</text>
<text x="701.0" y="237.7" font-size="12" fill="#111">b</text>
<path d="M766.0 211.2 H778.0" stroke="#b85858" stroke-width="1.1"/>
<circle cx="780.5" cy="211.2" r="3.1" fill="#d4d4d4" stroke="#8a8a8a" stroke-width="1"/>
<path d="M887.3 192.5 H938.8 Q946.3 192.5 946.3 200.0 V223.8 C946.3 227.3 941.5 227.2 941.5 230.2 V242.5 C941.5 245.5 946.3 245.0 946.3 248.5 V275.5 Q946.3 283.0 938.8 283.0 H887.3 Q879.8 283.0 879.8 275.5 V248.5 C879.8 245.0 884.5999999999999 245.5 884.5999999999999 242.5 V230.2 C884.5999999999999 227.2 879.8 227.3 879.8 223.8 V200.0 Q879.8 192.5 887.3 192.5 Z" fill="#fff" stroke="#787878" stroke-width="1.2"/>
<text x="913.05" y="207.7" text-anchor="middle" font-size="12" fill="#333">DIV</text>
<path d="M867.8 251.2 H879.8" stroke="#15158f" stroke-width="1"/>
<circle cx="864.8" cy="251.2" r="3.1" fill="#d4d4d4" stroke="#8a8a8a" stroke-width="1"/>
<path d="M867.8 271.2 H879.8" stroke="#15158f" stroke-width="1"/>
<circle cx="864.8" cy="271.2" r="3.1" fill="#d4d4d4" stroke="#8a8a8a" stroke-width="1"/>
<text x="881.3" y="257.7" font-size="12" fill="#111">a</text>
<text x="881.3" y="277.7" font-size="12" fill="#111">b</text>
<path d="M946.3 251.2 H958.3" stroke="#b85858" stroke-width="1.1"/>
<circle cx="960.8" cy="251.2" r="3.1" fill="#d4d4d4" stroke="#8a8a8a" stroke-width="1"/>
<path d="M1089.4 336.5 H1140.9 Q1148.4 336.5 1148.4 344.0 V367.8 C1148.4 371.3 1143.6000000000001 371.2 1143.6000000000001 374.2 V386.5 C1143.6000000000001 389.5 1148.4 389.0 1148.4 392.5 V419.5 Q1148.4 427.0 1140.9 427.0 H1089.4 Q1081.9 427.0 1081.9 419.5 V392.5 C1081.9 389.0 1086.7 389.5 1086.7 386.5 V374.2 C1086.7 371.2 1081.9 371.3 1081.9 367.8 V344.0 Q1081.9 336.5 1089.4 336.5 Z" fill="#fff" stroke="#787878" stroke-width="1.2"/>
<text x="1115.15" y="351.7" text-anchor="middle" font-size="12" fill="#333">SUB</text>
<path d="M1069.9 395.2 H1081.9" stroke="#15158f" stroke-width="1"/>
<circle cx="1066.9" cy="395.2" r="3.1" fill="#d4d4d4" stroke="#8a8a8a" stroke-width="1"/>
<path d="M1069.9 415.2 H1081.9" stroke="#15158f" stroke-width="1"/>
<circle cx="1066.9" cy="415.2" r="3.1" fill="#d4d4d4" stroke="#8a8a8a" stroke-width="1"/>
<text x="1083.4" y="401.7" font-size="12" fill="#111">a</text>
<text x="1083.4" y="421.7" font-size="12" fill="#111">b</text>
<path d="M1148.4 395.2 H1160.4" stroke="#b85858" stroke-width="1.1"/>
<circle cx="1162.9" cy="395.2" r="3.1" fill="#d4d4d4" stroke="#8a8a8a" stroke-width="1"/>
<path d="M702.7 451.5 H754.2 Q761.7 451.5 761.7 459.0 V482.8 C761.7 486.3 756.9000000000001 486.2 756.9000000000001 489.2 V501.5 C756.9000000000001 504.5 761.7 504.0 761.7 507.5 V534.5 Q761.7 542.0 754.2 542.0 H702.7 Q695.2 542.0 695.2 534.5 V507.5 C695.2 504.0 700.0 504.5 700.0 501.5 V489.2 C700.0 486.2 695.2 486.3 695.2 482.8 V459.0 Q695.2 451.5 702.7 451.5 Z" fill="#fff" stroke="#787878" stroke-width="1.2"/>
<text x="728.45" y="466.7" text-anchor="middle" font-size="12" fill="#333">SUB</text>
<path d="M683.2 510.2 H695.2" stroke="#15158f" stroke-width="1"/>
<circle cx="680.2" cy="510.2" r="3.1" fill="#d4d4d4" stroke="#8a8a8a" stroke-width="1"/>
<path d="M683.2 530.2 H695.2" stroke="#15158f" stroke-width="1"/>
<circle cx="680.2" cy="530.2" r="3.1" fill="#d4d4d4" stroke="#8a8a8a" stroke-width="1"/>
<text x="696.7" y="516.7" font-size="12" fill="#111">a</text>
<text x="696.7" y="536.7" font-size="12" fill="#111">b</text>
<path d="M761.7 510.2 H773.7" stroke="#b85858" stroke-width="1.1"/>
<circle cx="776.2" cy="510.2" r="3.1" fill="#d4d4d4" stroke="#8a8a8a" stroke-width="1"/>
<path d="M890.1 457.8 H941.6 Q949.1 457.8 949.1 465.3 V489.1 C949.1 492.6 944.3000000000001 492.5 944.3000000000001 495.5 V507.8 C944.3000000000001 510.8 949.1 510.29999999999995 949.1 513.8 V540.8 Q949.1 548.3 941.6 548.3 H890.1 Q882.6 548.3 882.6 540.8 V513.8 C882.6 510.29999999999995 887.4 510.8 887.4 507.8 V495.5 C887.4 492.5 882.6 492.6 882.6 489.1 V465.3 Q882.6 457.8 890.1 457.8 Z" fill="#fff" stroke="#787878" stroke-width="1.2"/>
<text x="915.85" y="473.0" text-anchor="middle" font-size="12" fill="#333">MUL</text>
<path d="M870.6 516.5 H882.6" stroke="#15158f" stroke-width="1"/>
<circle cx="867.6" cy="516.5" r="3.1" fill="#d4d4d4" stroke="#8a8a8a" stroke-width="1"/>
<path d="M870.6 536.5 H882.6" stroke="#15158f" stroke-width="1"/>
<circle cx="867.6" cy="536.5" r="3.1" fill="#d4d4d4" stroke="#8a8a8a" stroke-width="1"/>
<text x="884.1" y="523.0" font-size="12" fill="#111">a</text>
<text x="884.1" y="543.0" font-size="12" fill="#111">b</text>
<path d="M949.1 516.5 H961.1" stroke="#b85858" stroke-width="1.1"/>
<circle cx="963.6" cy="516.5" r="3.1" fill="#d4d4d4" stroke="#8a8a8a" stroke-width="1"/>
</svg><!-- panel -->
<div class="ptab" style="left:299px;transform:scaleX(0.872)">PROBLEMS</div>
<div class="ptab" style="left:373px;transform:scaleX(0.895)">WATCH</div>
<div class="ptab" style="left:429px;color:#424242;transform:scaleX(0.89)">OUTPUT</div>
<div class="abs" style="left:429px;top:634px;width:40px;height:1px;background:#9a9a9a"></div>
<div class="ptab" style="left:490px;transform:scaleX(0.886)">DEBUG CONSOLE</div>
<div class="ptab" style="left:596px;transform:scaleX(0.9)">TERMINAL</div>
<div class="abs" style="left:279px;top:636px;width:1087px;height:1px;background:#ececec"></div>
<div class="abs" style="left:1353px;top:637px;width:1px;height:67px;background:#dadada"></div>
<div class="abs" style="left:1005px;top:610px;width:160px;height:21px;border:1px solid #b9b9b9;background:#fff"></div>
<div class="abs" style="left:1010px;top:614px;font-size:13px;color:#333;white-space:nowrap">Tasks</div>
<svg style="left:1150px;top:614px" width="12" height="12" viewBox="0 0 12 12"><path d="M1.5 2.5 H9.5 L5.5 9 Z" fill="#222"/></svg>
<svg style="left:1175px;top:608px" width="191" height="26" viewBox="1175 608 191 26">
 <g fill="none" stroke="#333">
  <path d="M1188 615 H1196 M1188 619 H1196 M1182 623 H1196 M1182 627 H1196" stroke-width="1.6"/>
  <path d="M1182.5 614 L1186.5 618 M1186.5 614 L1182.5 618" stroke="#c0392b" stroke-width="1.5"/>
  <rect x="1215.5" y="620.5" width="8" height="6.5" stroke-width="1.3"/>
  <path d="M1219.5 622.5 V625" stroke-width="1.3"/>
  <path d="M1221.5 620.5 V617 Q1221.5 614.2 1224.5 614.2 Q1227.5 614.2 1227.5 617 V618.5" stroke-width="1.3"/>
  <path d="M1249.5 619 V627.5 H1257.5 V620.5 L1255.5 618.5 H1253.5" stroke="#b5b5b5" stroke-width="1"/>
  <path d="M1245.5 616 H1251 M1249 614 L1251 616 L1249 618" stroke="#8eb0d0" stroke-width="1.3"/>
  <path d="M1278.5 625 L1285 618.5 L1291.5 625" stroke-width="1.7"/>
  <rect x="1310.5" y="614.8" width="13" height="11.5" stroke-width="1.3"/>
 </g>
 <rect x="1317.5" y="614.8" width="6.5" height="11.8" fill="#333"/>
 <path d="M1344.5 616.5 L1353.5 625.5 M1353.5 616.5 L1344.5 625.5" stroke="#222" stroke-width="2.2"/>
</svg>
</body></html>
